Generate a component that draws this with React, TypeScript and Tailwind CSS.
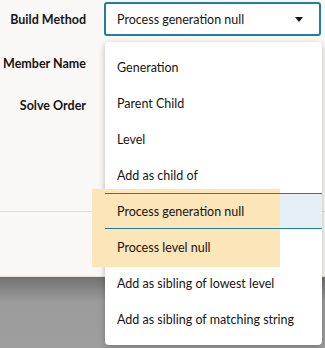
import React from 'react';

const options = [
  'Generation',
  'Parent Child',
  'Level',
  'Add as child of',
  'Process generation null',
  'Process level null',
  'Add as sibling of lowest level',
  'Add as sibling of matching string',
];

const selected = 'Process generation null';

const App: React.FC = () => {
  return (
    <div className="relative w-[325px] h-[348px] overflow-hidden bg-[#9e9e9e] text-[#161513] font-['Lato',sans-serif] text-[12.5px] whitespace-nowrap">
      {/* form area */}
      <div className="h-[277px] bg-[#f9f8f6] border-b border-[#e6e4e1] flex flex-col">
        <div className="grid grid-cols-[86px_1fr] gap-x-[18px] pt-[2px] pr-[4px]">
          <div className="h-[34px] flex items-center justify-end font-bold pt-[2px]">Build Method</div>
          <div className="h-[34px] rounded-[3px] border-2 border-[#227e9e] bg-white flex items-center pl-[11px] pr-[16px] pt-[2px]">
            <span className="flex-1">Process generation null</span>
            <svg width="8" height="5" viewBox="0 0 8 5" className="-mt-[2px]"><path d="M0 0h8L4 5z" fill="#161513" /></svg>
          </div>
          <div className="h-[46px] pt-[17px] flex justify-end font-bold leading-[22px]">Member Name</div>
          <div />
          <div className="h-[36px] pt-[13px] flex justify-end font-bold leading-[22px]">Solve Order</div>
          <div />
        </div>
        <div className="mt-auto mb-[64px] border-t border-[#e0dedb]" />
      </div>
      <div className="h-[71px] bg-gradient-to-b from-[#717171] via-[#9c9c9c] via-35% to-[#9e9e9e]" />

      {/* dropdown list */}
      <div className="absolute left-[105px] top-[42px] w-[217px] z-10 bg-white rounded-[4px] shadow-[0_2px_6px_rgba(0,0,0,0.25)] pt-[7px] pb-[8px]">
        {options.map(o => {
          const isSel = o === selected;
          return (
            <div
              key={o}
              className={
                isSel
                  ? 'relative h-[36px] flex items-center pl-[12px] pt-[3px] bg-[#e4f0f5]'
                  : 'relative h-[36px] flex items-center pl-[12px] pt-[3px]'
              }
            >
              {isSel && <div className="absolute left-0 right-0 top-0 h-px bg-[#227e9e] z-[2]" />}
              <span className="relative z-[2]">{o}</span>
              {isSel && <div className="absolute left-0 right-0 bottom-0 h-px bg-[#227e9e] z-[2]" />}
            </div>
          );
        })}
        {/* highlight overlay */}
        <div className="absolute left-[-13px] top-[147px] w-[188px] h-[78px] bg-[#fbe5b9] z-[1]" />
      </div>
    </div>
  );
};

export default App;
